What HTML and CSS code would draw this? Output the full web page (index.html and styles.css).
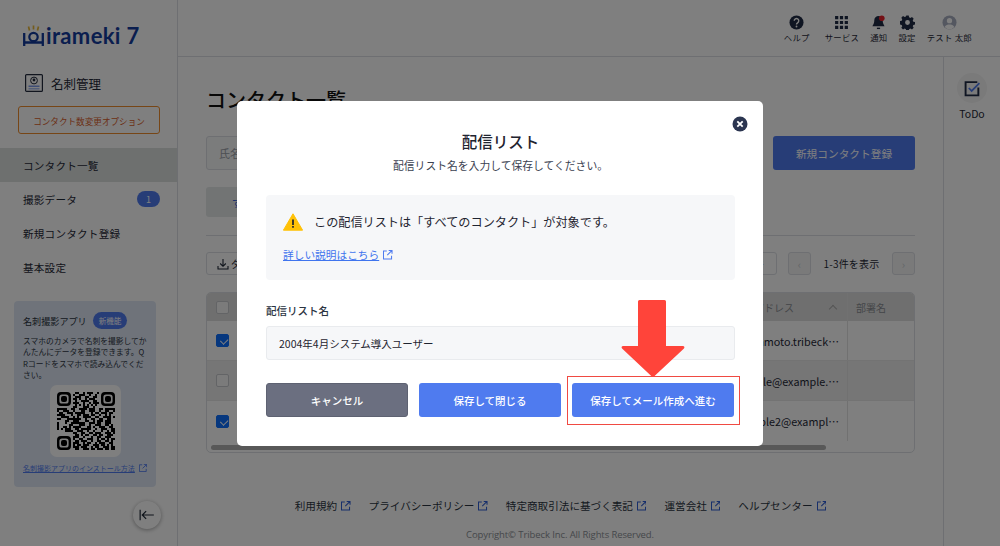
FILE: index.html
```html
<!DOCTYPE html>
<html lang="ja">
<head>
<meta charset="utf-8">
<title>配信リスト</title>
<link rel="stylesheet" href="styles.css">
</head>
<body>
<div class="app">
  <aside class="sidebar">
    <div class="logo">
      <svg class="logo-mark" viewBox="0 0 21 22" width="21" height="22">
        <path d="M6.500 5.500 5.500 1.500M10.500 4.500V.5M14.500 5.500 15.500 1.500" stroke="#e9b93a" stroke-width="1.700" fill="none"/>
        <path d="M1.200 8v13M19.800 8v13M1.200 17.500h18.600" stroke="#123a9c" stroke-width="2.300" fill="none"/>
        <circle cx="10.500" cy="12" r="4.200" stroke="#123a9c" stroke-width="2.200" fill="none"/>
      </svg>
      <span class="logo-text">irameki 7</span>
    </div>
    <div class="product">
      <svg class="product-icon" viewBox="0 0 18 18" width="18" height="18">
        <rect x=".6" y=".6" width="16.800" height="16.800" rx="1" fill="#fff" stroke="#222b3d" stroke-width="1.200"/>
        <circle cx="9" cy="6.500" r="3.400" fill="none" stroke="#222b3d" stroke-width="1"/>
        <circle cx="9" cy="6" r="1.400" fill="#222b3d"/>
        <path d="M3.500 11.500h11v1.500h-11z" fill="#7d9be8"/>
        <path d="M3.500 14h11v1.500h-11z" fill="#a9bef2"/>
      </svg>
      <span>名刺管理</span>
    </div>
    <a class="option-btn">コンタクト数変更オプション</a>
    <nav class="nav">
      <a class="nav-item is-active">コンタクト一覧</a>
      <a class="nav-item">撮影データ<span class="count">1</span></a>
      <a class="nav-item">新規コンタクト登録</a>
      <a class="nav-item">基本設定</a>
    </nav>
    <section class="app-card">
      <div class="app-card-head"><span>名刺撮影アプリ</span><span class="new-pill">新機能</span></div>
      <p class="app-card-text">スマホのカメラで名刺を撮影してかんたんにデータを登録できます。QRコードをスマホで読み込んでください。</p>
      <div class="qr-box">
        <svg viewBox="0 0 29 29" width="58" height="58">
          <path fill="#000" fill-rule="evenodd" d="M2 0h3a2 2 0 0 1 2 2v3a2 2 0 0 1-2 2H2a2 2 0 0 1-2-2V2a2 2 0 0 1 2-2zM2.500 1.200A1.300 1.300 0 0 0 1.200 2.500v2a1.300 1.300 0 0 0 1.300 1.300h2a1.300 1.300 0 0 0 1.300-1.300v-2a1.300 1.300 0 0 0-1.300-1.300zM3 2h1a1 1 0 0 1 1 1v1a1 1 0 0 1-1 1H3a1 1 0 0 1-1-1V3a1 1 0 0 1 1-1zM24 0h3a2 2 0 0 1 2 2v3a2 2 0 0 1-2 2h-3a2 2 0 0 1-2-2V2a2 2 0 0 1 2-2zM24.500 1.200a1.300 1.300 0 0 0-1.300 1.300v2a1.300 1.300 0 0 0 1.300 1.300h2a1.300 1.300 0 0 0 1.300-1.300v-2a1.300 1.300 0 0 0-1.300-1.300zM25 2h1a1 1 0 0 1 1 1v1a1 1 0 0 1-1 1h-1a1 1 0 0 1-1-1V3a1 1 0 0 1 1-1zM2 22h3a2 2 0 0 1 2 2v3a2 2 0 0 1-2 2H2a2 2 0 0 1-2-2v-3a2 2 0 0 1 2-2zM2.500 23.200a1.300 1.300 0 0 0-1.300 1.300v2a1.300 1.300 0 0 0 1.300 1.300h2a1.300 1.300 0 0 0 1.300-1.300v-2a1.300 1.300 0 0 0-1.300-1.300zM3 24h1a1 1 0 0 1 1 1v1a1 1 0 0 1-1 1H3a1 1 0 0 1-1-1v-1a1 1 0 0 1 1-1z"/>
          <path stroke="#000" stroke-width="1" fill="none" d="M9 .5h2m2 0h1m1 0h3m2 0h1M8 1.500h1m2 0h3m2 0h1m2 0h1M9 2.500h3m2 0h2m2 0h2M8 3.500h2m1 0h1m2 0h1m1 0h3M9 4.500h1m2 0h4m2 0h2M8 5.500h3m2 0h1m2 0h1m1 0h3M9 6.500h1m1 0h1m1 0h1m1 0h1m1 0h1m1 0h1M8 7.500h2m3 0h3m2 0h1M0 8.500h5m2 0h2m2 0h4m1 0h3m2 0h2m1 0h5M0 9.500h1m2 0h3m2 0h1m3 0h2m2 0h3m2 0h1m2 0h2m2 0h1M1 10.500h2m2 0h3m1 0h5m3 0h1m1 0h2m1 0h3m1 0h2M0 11.500h4m3 0h1m2 0h2m1 0h3m1 0h2m2 0h1m2 0h1m1 0h1M2 12.500h4m2 0h1m1 0h1m2 0h4m2 0h2m2 0h4m1 0h1M0 13.500h2m3 0h7m2 0h1m2 0h2m2 0h2m2 0h2M4 14.500h2m2 0h3m3 0h2m2 0h1m1 0h3m1 0h3M0 15.500h1m3 0h1m2 0h7m2 0h3m1 0h2m2 0h3M0 16.500h1m5 0h2m3 0h3m2 0h1m2 0h3m2 0h2m1 0h1M0 17.500h1m2 0h2m1 0h1m1 0h4m3 0h2m1 0h1m2 0h3m2 0h2M0 18.500h1m1 0h1m1 0h3m2 0h2m1 0h5m2 0h1m2 0h3m2 0h2M4 19.500h4m2 0h3m2 0h1m2 0h1m3 0h1m2 0h1m1 0h2M8 20.500h2m2 0h2m2 0h2m1 0h3m2 0h3m1 0h2M9 21.500h2m1 0h1m1 0h2m2 0h2m1 0h2m2 0h3M8 22.500h3m2 0h1m3 0h1m2 0h2m2 0h3M8 23.500h1m2 0h2m2 0h3m2 0h1m1 0h2m1 0h1m1 0h2M9 24.500h2m1 0h3m2 0h1m2 0h2m2 0h2m1 0h1M8 25.500h3m2 0h1m1 0h2m2 0h1m1 0h3m2 0h2M8 26.500h1m1 0h2m1 0h3m2 0h3m1 0h2m1 0h1m1 0h1M8 27.500h3m1 0h3m2 0h1m1 0h2m2 0h3m1 0h2M9 28.500h2m2 0h3m1 0h2m1 0h3m1 0h2m1 0h2"/>
        </svg>
      </div>
      <a class="app-card-link"><span>名刺撮影アプリのインストール方法</span><svg class="ext ext-sm" viewBox="1 1 10 10"><use href="#ext-icon"/></svg></a>
    </section>
    <button class="collapse" aria-label="閉じる">
      <svg viewBox="0 0 18 14" width="16" height="12"><path d="M1 1v12M17 7H4M8 2.500 3.500 7 8 11.500" fill="none" stroke="#1f2937" stroke-width="1.400"/></svg>
    </button>
  </aside>

  <div class="main">
    <header class="topbar">
      <a class="top-item">
        <svg viewBox="0 0 16 16" width="15" height="15"><circle cx="8" cy="8" r="7.500" fill="#1f2a44"/><path d="M5.600 6.200a2.400 2.400 0 1 1 3.600 2.100c-.8.500-1.200.8-1.200 1.700" fill="none" stroke="#fff" stroke-width="1.500"/><circle cx="8" cy="12.200" r="1" fill="#fff"/></svg>
        <span>ヘルプ</span>
      </a>
      <a class="top-item top-item-wide">
        <svg viewBox="0 0 14 14" width="15" height="15" fill="#1f2a44"><path d="M1 1h3v3H1zM5.500 1h3v3h-3zM10 1h3v3h-3zM1 5.500h3v3H1zM5.500 5.500h3v3h-3zM10 5.500h3v3h-3zM1 10h3v3H1zM5.500 10h3v3h-3zM10 10h3v3h-3z"/></svg>
        <span>サービス</span>
      </a>
      <a class="top-item">
        <svg viewBox="0 0 16 16" width="15" height="15"><path d="M8 1a4.500 4.500 0 0 0-4.500 4.500c0 4-1.800 5.500-2 6.500h13c-.2-1-2-2.500-2-6.500A4.500 4.500 0 0 0 8 1z" fill="#1f2a44"/><path d="M6.300 13.500h3.400V15H6.300z" fill="#1f2a44"/><circle cx="11.500" cy="3.500" r="3" fill="#e8202a"/></svg>
        <span>通知</span>
      </a>
      <a class="top-item">
        <svg viewBox="0 0 16 16" width="15" height="15"><path fill="#1f2a44" fill-rule="evenodd" d="M6.700.5h2.600l.4 2 1.300.6 1.800-1 1.800 1.900-1 1.700.6 1.400 2 .4v2.600l-2 .5-.6 1.300 1 1.800-1.800 1.800-1.800-1-1.300.6-.4 2H6.700l-.4-2-1.300-.6-1.800 1-1.800-1.800 1-1.800-.6-1.300-2-.5V6.500l2-.4.6-1.400-1-1.700L3.200 1.100l1.800 1 1.300-.6zM8 5.400a2.600 2.600 0 1 0 0 5.200 2.600 2.600 0 0 0 0-5.200z"/></svg>
        <span>設定</span>
      </a>
      <a class="top-item">
        <svg viewBox="0 0 16 16" width="15" height="15"><circle cx="8" cy="8" r="7.500" fill="#a9afc0"/><circle cx="8" cy="6" r="2.800" fill="#fff"/><path d="M2.800 12.800C4 10.600 6 10 8 10s4 .6 5.200 2.800A7.500 7.500 0 0 1 8 15.500a7.500 7.500 0 0 1-5.200-2.700z" fill="#fff"/></svg>
        <span>テスト 太郎</span>
      </a>
    </header>
    <div class="body-row">
      <main class="content">
        <h1 class="page-title">コンタクト一覧</h1>
        <div class="search-row">
          <div class="search-input">氏名</div>
          <a class="primary-btn">新規コンタクト登録</a>
        </div>
        <div class="tab-row"><a class="tab">すべて</a></div>
        <div class="tool-row">
          <a class="dl-btn">
            <svg viewBox="0 0 12 12" width="12" height="12"><path d="M6 1v7M3.200 5.500 6 8.300l2.800-2.800M1 8v3h10V8" fill="none" stroke="#1f2937" stroke-width="1.100"/></svg>
            <span>ダウンロード</span>
          </a>
          <div class="pager">
            <a class="per-page">10件</a>
            <a class="page-btn">‹</a>
            <span class="page-label">1-3件を表示</span>
            <a class="page-btn">›</a>
          </div>
        </div>
        <div class="table-wrap">
          <div class="t-row t-head">
            <div class="c-check"><i class="cb"></i></div>
            <div class="c-name"></div>
            <div class="c-mail">メールアドレス<span class="caret"></span></div>
            <div class="c-dept">部署名</div>
          </div>
          <div class="t-row r1">
            <div class="c-check"><i class="cb on"></i></div>
            <div class="c-name"></div>
            <div class="c-mail"><span class="mail">yamamoto.tribeck…</span></div>
            <div class="c-dept"></div>
          </div>
          <div class="t-row r2">
            <div class="c-check"><i class="cb"></i></div>
            <div class="c-name"></div>
            <div class="c-mail"><span class="mail">sample@example.…</span></div>
            <div class="c-dept"></div>
          </div>
          <div class="t-row r3">
            <div class="c-check"><i class="cb on"></i></div>
            <div class="c-name"></div>
            <div class="c-mail"><span class="mail">sample2@exampl…</span></div>
            <div class="c-dept"></div>
          </div>
          <div class="scroll-track"><div class="scroll-thumb"></div></div>
        </div>
        <footer class="footer">
          <div class="foot-links">
            <a>利用規約<svg class="ext" viewBox="1 1 10 10"><use href="#ext-icon"/></svg></a>
            <a>プライバシーポリシー<svg class="ext" viewBox="1 1 10 10"><use href="#ext-icon"/></svg></a>
            <a>特定商取引法に基づく表記<svg class="ext" viewBox="1 1 10 10"><use href="#ext-icon"/></svg></a>
            <a>運営会社<svg class="ext" viewBox="1 1 10 10"><use href="#ext-icon"/></svg></a>
            <a>ヘルプセンター<svg class="ext" viewBox="1 1 10 10"><use href="#ext-icon"/></svg></a>
          </div>
          <p class="copyright">Copyright© Tribeck Inc. All Rights Reserved.</p>
        </footer>
      </main>
      <aside class="rail">
        <span class="todo-circle">
          <svg viewBox="0 0 16 16" width="17" height="17"><path d="M13.500 7V14.500H1.500V2H12.500" fill="none" stroke="#1f2a44" stroke-width="1.800"/><path d="M4.500 7.500 7.200 10.300 14.500 3" fill="none" stroke="#4f7bef" stroke-width="1.600"/></svg>
        </span>
        <span class="todo-label">ToDo</span>
      </aside>
    </div>
  </div>
</div>

<div class="overlay"></div>
<div class="modal" role="dialog">
  <button class="modal-close" aria-label="閉じる">
    <svg viewBox="0 0 16 16" width="16" height="16"><circle cx="8" cy="8" r="7.500" fill="#2b3550"/><path d="M5.300 5.300l5.400 5.400M10.700 5.300l-5.400 5.400" stroke="#fff" stroke-width="1.800"/></svg>
  </button>
  <h2 class="modal-title">配信リスト</h2>
  <p class="modal-sub">配信リスト名を入力して保存してください。</p>
  <div class="notice">
    <div class="notice-main">
      <svg viewBox="0 0 20 18" width="20" height="18"><path d="M10 .8 19.600 17.200H.4z" fill="#ffc107" stroke="#ffc107" stroke-width="1" stroke-linejoin="round"/><path d="M9.100 6.500h1.800v5.500H9.100zM9.100 13h1.800v1.800H9.100z" fill="#2b2b2b"/></svg>
      <span>この配信リストは「すべてのコンタクト」が対象です。</span>
    </div>
    <a class="notice-link"><span>詳しい説明はこちら</span><svg class="ext ext-blue" viewBox="1 1 10 10"><use href="#ext-icon"/></svg></a>
  </div>
  <label class="field-label">配信リスト名</label>
  <div class="field-input">2004年4月システム導入ユーザー</div>
  <div class="modal-actions">
    <a class="m-btn m-cancel">キャンセル</a>
    <a class="m-btn m-save">保存して閉じる</a>
    <a class="m-btn m-next">保存してメール作成へ進む</a>
  </div>
</div>
<div class="callout-box"></div>
<svg class="callout-arrow" viewBox="0 0 64 77" width="64" height="77"><path d="M17 1.500A1.500 1.500 0 0 1 18.500 0h25A1.500 1.500 0 0 1 45 1.500V46h16.500c2 0 2.500 1.500 1.200 2.800L33 76.500a1.500 1.500 0 0 1-2.200 0L1.300 48.800C0 47.500.5 46 2.500 46H17z" fill="#ff443a"/></svg>

<svg class="sprite" width="0" height="0" aria-hidden="true"><defs><g id="ext-icon" fill="none" stroke="currentColor" stroke-width="1.100"><path d="M5 2H1.500v8.500H10V7"/><path d="M7 1.500h3.500V5M10.500 1.500 5.500 6.500"/></g></defs></svg>
</body>
</html>
```

FILE: styles.css
```css
* { box-sizing: border-box; }
html, body { margin: 0; height: 100%; overflow: hidden; }
body {
  font-family: "Noto Sans CJK JP", "Noto Sans", sans-serif;
  color: #1f2937;
  background: #fff;
}
a { color: inherit; text-decoration: none; }
p, h1, h2 { margin: 0; }
button { border: 0; padding: 0; background: none; font: inherit; }
.sprite { position: absolute; }

.app { display: flex; height: 546px; }

/* sidebar */
.sidebar {
  width: 178px;
  flex: none;
  height: 546px;
  border-right: 1px solid #dcdfe4;
  display: flex;
  flex-direction: column;
  position: relative;
}
.logo { display: flex; align-items: flex-end; gap: 2px; margin: 24px 0 0 23px; height: 24px; }
.logo-mark { flex: none; margin-bottom: 1px; }
.logo-text {
  font-family: "Lato", sans-serif;
  font-weight: 700;
  font-size: 22px;
  line-height: 24px;
  letter-spacing: .35px;
  color: #143c9e;
}
.product { display: flex; align-items: center; gap: 8px; margin: 26px 0 0 25px; height: 18px; font-size: 12.500px; }
.product-icon { flex: none; }
.option-btn {
  margin: 14px 0 0 18px;
  width: 142px;
  height: 28px;
  padding-top: 1px;
  border: 1px solid #ef8c2c;
  border-radius: 3px;
  font-size: 8.600px;
  color: #d9602a;
  display: flex;
  align-items: center;
  justify-content: center;
}
.nav { margin-top: 14px; display: flex; flex-direction: column; }
.nav-item {
  height: 34.200px;
  padding: 0 17px 0 23px;
  display: flex;
  align-items: center;
  justify-content: space-between;
  font-size: 10.600px;
  letter-spacing: .02em;
}
.nav-item.is-active { background: #dce1df; }
.count {
  width: 23px;
  height: 16px;
  border-radius: 8px;
  background: #4f7bef;
  color: #fff;
  font-size: 9px;
  display: flex;
  align-items: center;
  justify-content: center;
}
.app-card {
  margin: 16px 0 0 14px;
  width: 142px;
  height: 186px;
  background: #dfe7f4;
  border-radius: 4px;
  padding: 11px 8px 0 9px;
}
.app-card-head { display: flex; align-items: center; gap: 6px; font-size: 9.100px; height: 18px; color: #2b3442; }
.new-pill {
  background: #4f7bef;
  color: #fff;
  border-radius: 9px;
  font-size: 7.600px;
  height: 17px;
  padding: 0 6px;
  display: flex;
  align-items: center;
}
.app-card-text { margin-top: 5px; font-size: 7.750px; line-height: 11.400px; color: #2b3442; word-break: break-all; }
.qr-box {
  margin: 5px 0 0 27px;
  width: 71px;
  height: 72px;
  background: #fff;
  border-radius: 7px;
  display: flex;
  align-items: center;
  justify-content: center;
}
.app-card-link { display: flex; align-items: center; gap: 4px; margin-top: 5px; font-size: 7px; color: #4f7bef; line-height: 12px; white-space: nowrap; }
.app-card-link span { text-decoration: underline; }
.collapse {
  position: absolute;
  left: 133px;
  top: 501px;
  width: 28px;
  height: 28px;
  border-radius: 50%;
  background: #fff;
  box-shadow: 0 1px 4px rgba(0,0,0,.35);
  display: flex;
  align-items: center;
  justify-content: center;
}

/* main */
.main { flex: 1; min-width: 0; display: flex; flex-direction: column; height: 546px; }
.topbar {
  height: 57px;
  flex: none;
  border-bottom: 1px solid #dcdfe4;
  display: flex;
  justify-content: flex-end;
  align-items: flex-start;
  gap: 11px;
  padding: 15px 28px 0 0;
}
.top-item { display: flex; flex-direction: column; align-items: center; gap: 1px; font-size: 8.400px; line-height: 12px; letter-spacing: .03em; }
.top-item-wide { margin-left: 4px; }
.body-row { display: flex; flex: 1; min-height: 0; }
.content { flex: 1; min-width: 0; padding: 0 28px 0 28px; }
.rail { width: 57px; flex: none; border-left: 1px solid #dcdfe4; display: flex; flex-direction: column; align-items: center; padding-top: 16px; }
.todo-circle { width: 30px; height: 30px; border-radius: 50%; background: #f4f4f4; display: flex; align-items: center; justify-content: center; }
.todo-label { margin-top: 3px; font-size: 10.500px; line-height: 16px; }

.page-title { margin-top: 28px; font-size: 20px; line-height: 30px; font-weight: 500; color: #111; }
.search-row { margin-top: 21px; display: flex; justify-content: space-between; }
.search-input { width: 540px; height: 34px; border: 1px solid #dcdfe4; border-radius: 3px; background: #f7f8f9; font-size: 11px; color: #9aa0a8; display: flex; align-items: center; padding-left: 12px; }
.primary-btn { width: 142px; height: 34px; border-radius: 3px; background: #4f7bef; color: #fff; font-size: 10.700px; display: flex; align-items: center; justify-content: center; }
.tab-row { margin-top: 17px; padding-bottom: 18px; border-bottom: 1px solid #dcdfe4; }
.tab { width: 130px; height: 30px; border-radius: 3px; background: #e4e8e8; color: #2f5fd6; font-size: 10px; display: flex; align-items: center; padding-left: 26px; }
.tool-row { margin-top: 16px; display: flex; justify-content: space-between; align-items: center; height: 23px; }
.dl-btn { display: flex; align-items: center; gap: 2px; height: 23px; padding: 0 10px; border: 1px solid #dcdfe4; border-radius: 3px; font-size: 10px; }
.pager { display: flex; align-items: center; }
.per-page { width: 48px; height: 23px; margin-right: 11px; border: 1px solid #dcdfe4; border-radius: 3px; font-size: 10px; display: flex; align-items: center; justify-content: center; }
.page-btn { width: 23px; height: 23px; border: 1px solid #dcdfe4; background: #f4f5f5; border-radius: 3px; color: #c9ccd0; font-size: 11px; display: flex; align-items: center; justify-content: center; }
.page-label { width: 81px; text-align: center; font-size: 10px; letter-spacing: .02em; }

.table-wrap { margin-top: 17px; height: 161px; border: 1px solid #dcdfe4; border-radius: 5px; overflow: hidden; position: relative; }
.t-row { display: flex; font-size: 11px; }
.t-row > div { display: flex; align-items: center; }
.t-head { height: 28px; background: #dfdfdf; color: #8a8d92; font-size: 10px; }
.r1 { height: 40px; border-bottom: 1px solid #e6e6e6; }
.r2 { height: 40px; background: #ececec; border-bottom: 1px solid #e6e6e6; }
.r3 { height: 40px; }
.c-check { width: 32px; flex: none; padding-left: 9px; }
.cb { display: block; width: 13px; height: 13px; border: 1px solid #c6c8cc; border-radius: 2px; background: #f6f6f6; position: relative; }
.cb.on { background: #0d6efd; border-color: #0d6efd; }
.cb.on::after { content: ""; position: absolute; left: 3px; top: 1px; width: 6px; height: 4px; border-left: 1.500px solid #fff; border-bottom: 1.500px solid #fff; transform: rotate(-45deg) translate(-1px, 2px); }
.c-name { width: 200px; flex: none; padding-left: 8px; }
.c-mail { flex: 1; min-width: 0; justify-content: flex-end; padding-right: 8px; gap: 10px; }
.c-dept { width: 67px; flex: none; border-left: 1px solid #e2e2e2; padding-left: 8px; color: #8a8d92; }
.caret { width: 6px; height: 6px; border-left: 1px solid #aaa; border-top: 1px solid #aaa; transform: rotate(45deg); margin-top: 3px; margin-left: 26px; margin-right: 3px; }
.mail { font-size: 10.800px; white-space: nowrap; }
.scroll-track { position: absolute; left: 4px; right: 4px; bottom: 2px; height: 5px; }
.scroll-thumb { width: 88%; height: 5px; border-radius: 3px; background: #b0b0b0; }

.footer { margin-top: 45px; text-align: center; }
.foot-links { display: flex; gap: 18px; justify-content: flex-end; padding-right: 89px; font-size: 10.600px; line-height: 16px; color: #2b3442; white-space: nowrap; }
.foot-links a { display: flex; align-items: center; gap: 4px; }
.ext { width: 9.500px; height: 9.500px; flex: none; color: #2f5fd6; }
.ext-sm { width: 8px; height: 8px; color: #4f7bef; }
.ext-blue { color: #4f7bef; }
.copyright { margin-top: 14px; margin-left: -1px; font-family: "Open Sans", sans-serif; font-size: 9.500px; line-height: 14px; color: #8b8f96; letter-spacing: -.1px; white-space: nowrap; }

/* modal */
.overlay { position: fixed; inset: 0; background: rgba(0,0,0,.5); }
.modal {
  position: fixed;
  left: 237px;
  top: 101px;
  width: 526px;
  height: 345px;
  background: #fff;
  border-radius: 5px;
  padding: 27px 28px 0 29px;
  display: flex;
  flex-direction: column;
}
.modal-close { position: absolute; left: 495px; top: 15px; width: 16px; height: 16px; display: block; line-height: 0; }
.modal-title { font-size: 15.500px; line-height: 26px; font-weight: 500; text-align: center; color: #1f2430; }
.modal-sub { margin-top: 2px; font-size: 10.800px; line-height: 18px; text-align: center; color: #3a4150; }
.notice { margin-top: 21px; height: 85px; background: #f6f7f9; border-radius: 4px; padding: 18px 17px 0; }
.notice-main { display: flex; align-items: center; gap: 11px; font-size: 12.150px; line-height: 18px; color: #1f2430; }
.notice-main svg { flex: none; }
.notice-link { margin-top: 16px; display: flex; align-items: center; gap: 4px; font-size: 10.700px; line-height: 16px; color: #3f74ee; }
.notice-link span { text-decoration: underline; }
.field-label { margin-top: 23px; font-size: 10.500px; line-height: 16px; font-weight: 500; color: #2b3442; }
.field-input { margin-top: 7px; height: 34px; flex: none; background: #f6f7f9; border: 1px solid #e9ebee; border-radius: 3px; font-size: 10.500px; display: flex; align-items: center; padding-left: 12px; color: #1f2430; }
.modal-actions { margin-top: 23px; display: flex; justify-content: space-between; margin-right: 1px; }
.m-btn { height: 34px; border-radius: 3px; color: #fff; font-size: 10.500px; font-weight: 500; display: flex; align-items: center; justify-content: center; }
.m-cancel { width: 142px; background: #6b6f80; border: 1px solid #5e6272; }
.m-save { width: 142px; background: #4f7bef; }
.m-next { width: 162px; background: #4f7bef; }
.callout-box { position: fixed; left: 567px; top: 376px; width: 173px; height: 49px; border: 1px solid #f04a42; }
.callout-arrow { position: fixed; left: 621px; top: 300px; }
```
